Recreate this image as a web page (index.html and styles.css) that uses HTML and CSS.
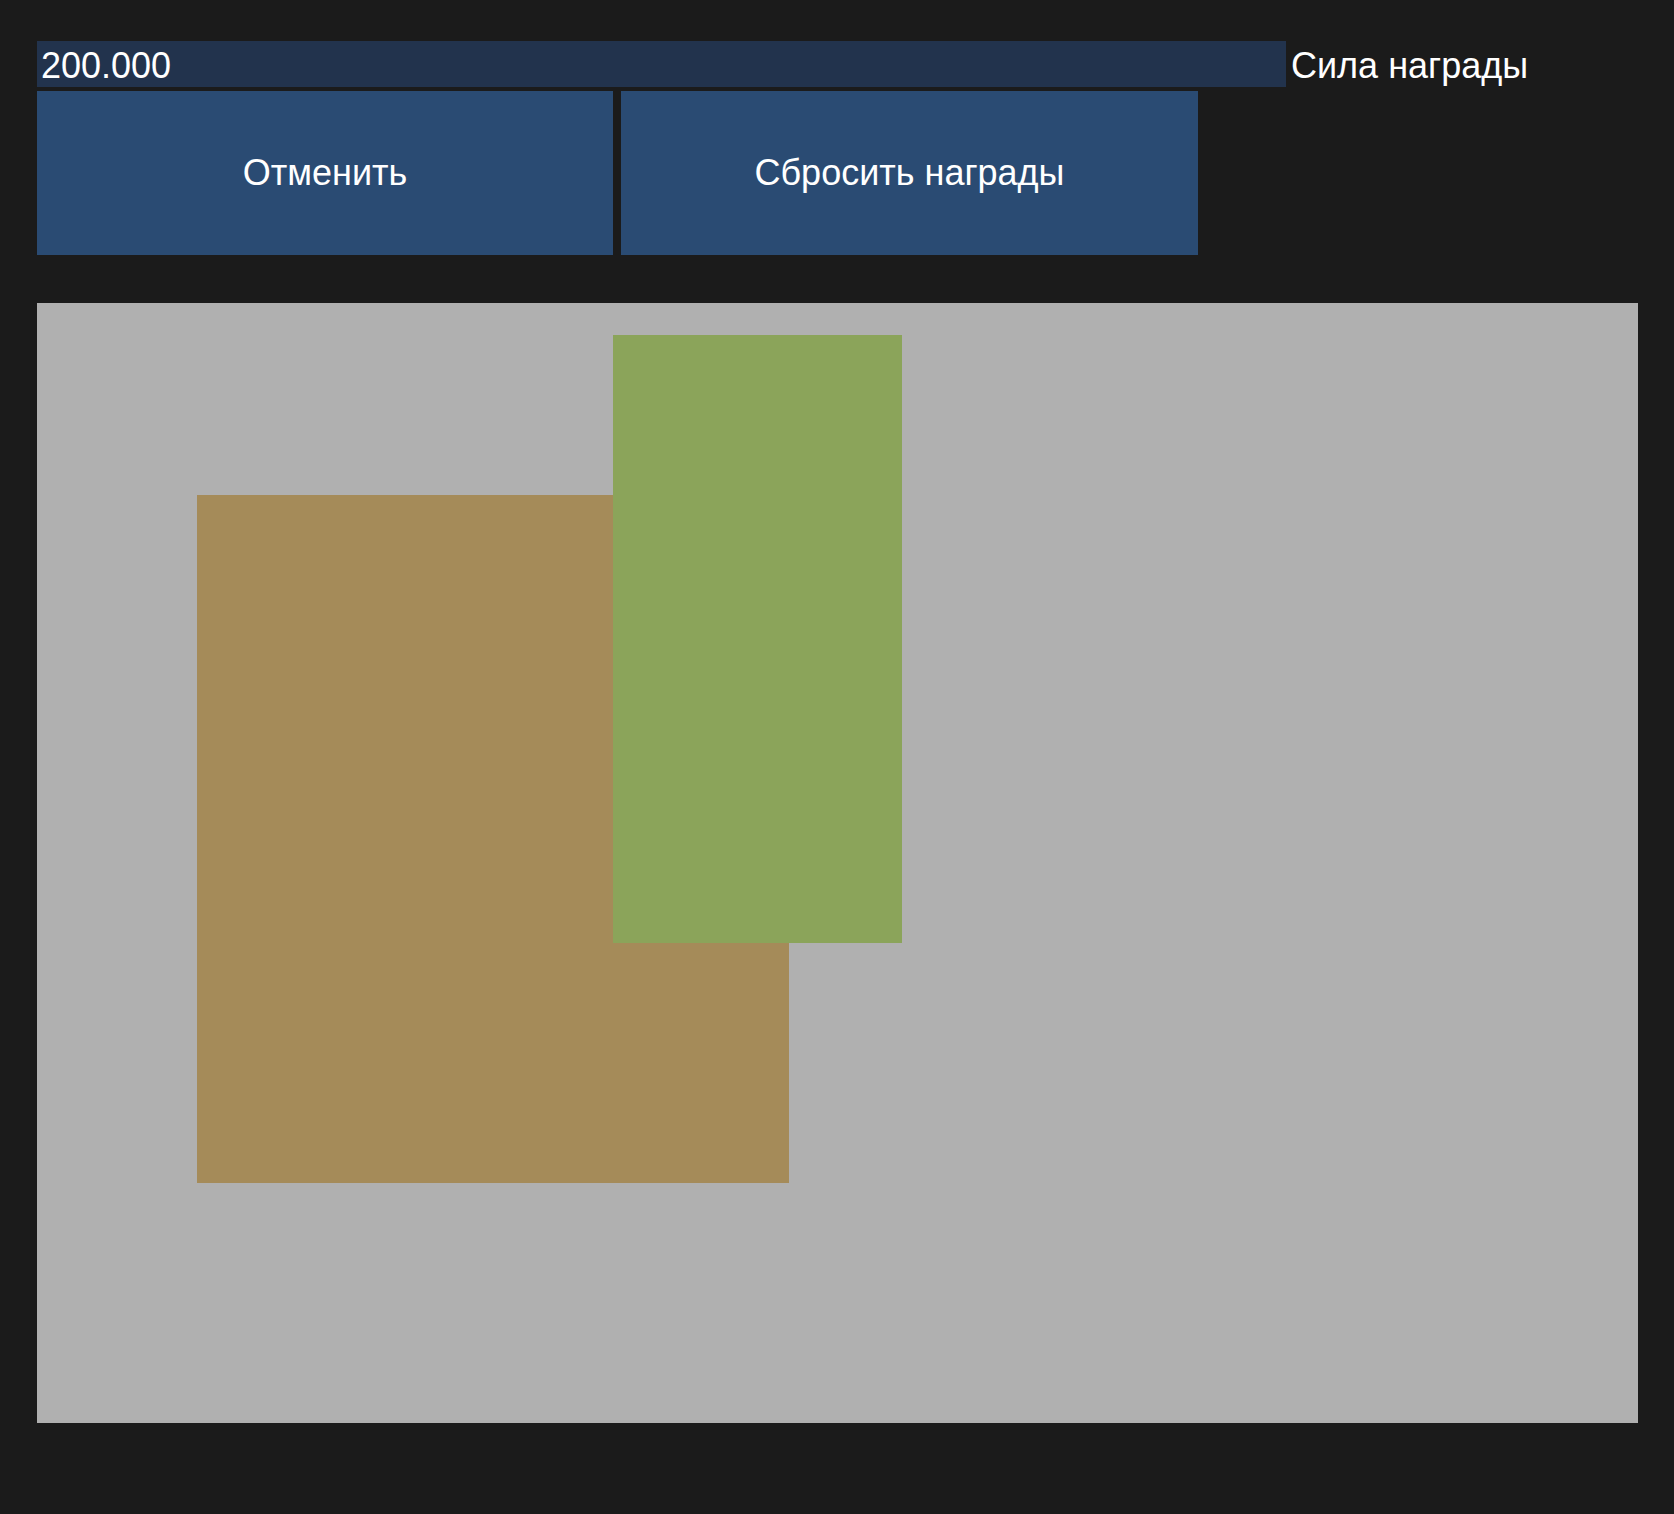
FILE: index.html
```html
<!DOCTYPE html>
<html>
<head>
<meta charset="utf-8">
<link rel="stylesheet" href="styles.css">
</head>
<body>
<div class="page">
  <div class="row-top">
    <div class="field">200.000</div>
    <div class="label">Сила награды</div>
  </div>
  <div class="row-buttons">
    <div class="btn btn-cancel">Отменить</div>
    <div class="btn btn-reset">Сбросить награды</div>
  </div>
  <div class="canvas">
    <div class="rect rect-brown"></div>
    <div class="rect rect-green"></div>
  </div>
</div>
</body>
</html>
```

FILE: styles.css
```css
html, body {
  margin: 0;
  padding: 0;
  background: #1b1b1b;
}
body {
  font-family: "Liberation Sans", Arial, sans-serif;
  color: #ffffff;
}
.page {
  padding: 41px 0 0 37px;
}
.row-top {
  display: flex;
  align-items: flex-start;
  height: 46px;
}
.field {
  width: 1249px;
  height: 46px;
  box-sizing: border-box;
  background: #22334d;
  font-size: 36px;
  line-height: 42px;
  padding: 4px 0 0 4px;
}
.label {
  font-size: 36px;
  line-height: 42px;
  padding-top: 4px;
  margin-left: 5px;
}
.row-buttons {
  display: flex;
  gap: 8px;
  margin-top: 4px;
}
.btn {
  height: 164px;
  background: #2a4b73;
  display: flex;
  align-items: center;
  justify-content: center;
  font-size: 36px;
}
.btn-cancel { width: 576px; }
.btn-reset { width: 577px; }
.canvas {
  position: relative;
  margin-top: 48px;
  width: 1601px;
  height: 1120px;
  background: #b0b0b0;
}
.rect {
  position: absolute;
}
.rect-brown {
  left: 160px;
  top: 192px;
  width: 592px;
  height: 688px;
  background: #a58b59;
}
.rect-green {
  left: 576px;
  top: 32px;
  width: 289px;
  height: 608px;
  background: #8ba45a;
}
```
